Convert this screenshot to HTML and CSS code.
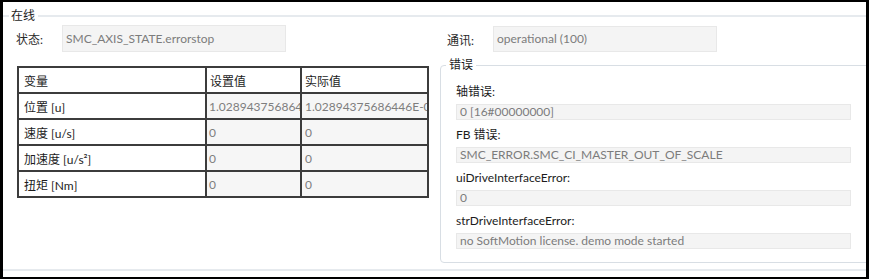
FILE: index.html
```html
<!DOCTYPE html>
<html>

<head>
    <meta charset="UTF-8">
    <title>轴状态</title>
    <link rel="stylesheet" href="styles.css">
</head>

<body>
    <div class="frame">
        <section class="online">
            <div class="group-title"><span>在线</span></div>
            <div class="online-body">
                <div class="col-left">
                    <div class="field-row">
                        <span class="row-label">状态:</span>
                        <div class="box wide">SMC_AXIS_STATE.errorstop</div>
                    </div>
                    <table class="axis-table">
                        <colgroup>
                            <col class="c-name">
                            <col class="c-set">
                            <col class="c-act">
                        </colgroup>
                        <tr class="head">
                            <td>变量</td>
                            <td>设置值</td>
                            <td>实际值</td>
                        </tr>
                        <tr>
                            <td>位置 [u]</td>
                            <td class="val">1.02894375686446E-05</td>
                            <td class="val">1.02894375686446E-05</td>
                        </tr>
                        <tr>
                            <td>速度 [u/s]</td>
                            <td class="val">0</td>
                            <td class="val">0</td>
                        </tr>
                        <tr>
                            <td>加速度 [u/s²]</td>
                            <td class="val">0</td>
                            <td class="val">0</td>
                        </tr>
                        <tr>
                            <td>扭矩 [Nm]</td>
                            <td class="val">0</td>
                            <td class="val">0</td>
                        </tr>
                    </table>
                </div>
                <div class="col-right">
                    <div class="field-row comm">
                        <span class="row-label">通讯:</span>
                        <div class="box wide">operational (100)</div>
                    </div>
                    <fieldset class="errors">
                        <legend>错误</legend>
                        <div class="err-list">
                            <div class="err-field">
                                <div class="err-label">轴错误:</div>
                                <div class="box thin">0 [16#00000000]</div>
                            </div>
                            <div class="err-field">
                                <div class="err-label">FB 错误:</div>
                                <div class="box thin">SMC_ERROR.SMC_CI_MASTER_OUT_OF_SCALE</div>
                            </div>
                            <div class="err-field">
                                <div class="err-label">uiDriveInterfaceError:</div>
                                <div class="box thin">0</div>
                            </div>
                            <div class="err-field">
                                <div class="err-label">strDriveInterfaceError:</div>
                                <div class="box thin">no SoftMotion license. demo mode started</div>
                            </div>
                        </div>
                    </fieldset>
                </div>
            </div>
        </section>
    </div>
</body>

</html>
```

FILE: styles.css
```css
html,
body {
    margin: 0;
    background: #fff;
}

body {
    font-family: Lato, "Noto Sans CJK SC", sans-serif;
    font-size: 12px;
    color: #1c1c1c;
}

.frame {
    width: 869px;
    height: 279px;
    box-sizing: border-box;
    border: 2px solid #000;
    border-left-width: 3px;
    border-right-width: 3px;
    overflow: hidden;
}

.online {
    margin-top: 6px;
    height: 263px;
    box-sizing: border-box;
    border-bottom: 2px solid #e6eaee;
    display: flex;
    flex-direction: column;
}

.group-title {
    display: flex;
    align-items: center;
    height: 16px;
    line-height: 16px;
    gap: 2px;
}

.group-title::before {
    content: "";
    width: 6px;
    border-top: 2px solid #e6eaee;
}

.group-title::after {
    content: "";
    flex: 1;
    margin-left: 1px;
    border-top: 2px solid #e6eaee;
}

.online-body {
    display: flex;
}

.col-left {
    width: 437px;
    flex-shrink: 0;
    box-sizing: border-box;
    padding-left: 13px;
    padding-top: 1px;
}

.col-right {
    flex: 1;
    padding-top: 2px;
}

.field-row {
    display: flex;
    align-items: center;
}

.comm {
    padding-left: 7px;
}

.row-label {
    width: 46px;
    color: #2a2a2a;
}

.box {
    box-sizing: border-box;
    background: #f4f4f4;
    border: 1px solid #e8e8e8;
    color: #7c7c7c;
    padding-left: 3px;
    white-space: nowrap;
    overflow: hidden;
}

.wide {
    width: 224px;
    height: 27px;
    line-height: 25px;
}

.comm .wide {
    height: 26px;
    line-height: 24px;
}

.thin {
    width: 395px;
    height: 16px;
    line-height: 14px;
}

/* axis values table */
.axis-table {
    margin: 14px 0 0 1px;
    border-collapse: collapse;
    table-layout: fixed;
    width: 410px;
    border: 2px solid #333;
}

.c-name {
    width: 188px;
}

.c-set {
    width: 95px;
}

.c-act {
    width: 127px;
}

.axis-table td {
    height: 24px;
    padding: 0 3px;
    border: 2px solid #3c3c3c;
    white-space: nowrap;
    overflow: hidden;
    text-overflow: clip;
}

.axis-table td:first-child {
    padding-left: 5px;
}

.axis-table td.val {
    background: #f6f6f6;
    color: #7e7e7e;
}

.axis-table td.val:nth-child(2) {
    padding-left: 2px;
}

/* error group */
.errors {
    margin: 5px -40px 0 0;
    padding: 0;
    min-width: 0;
    border: 1px solid #d8dee4;
    border-radius: 4px;
}

.errors legend {
    margin-left: 5px;
    padding: 0 3px;
    line-height: 16px;
}

.err-list {
    display: flex;
    flex-direction: column;
    gap: 6px;
    padding: 10px 0 13px 15px;
}

.err-label {
    line-height: 17px;
    margin-bottom: 4px;
}
```
